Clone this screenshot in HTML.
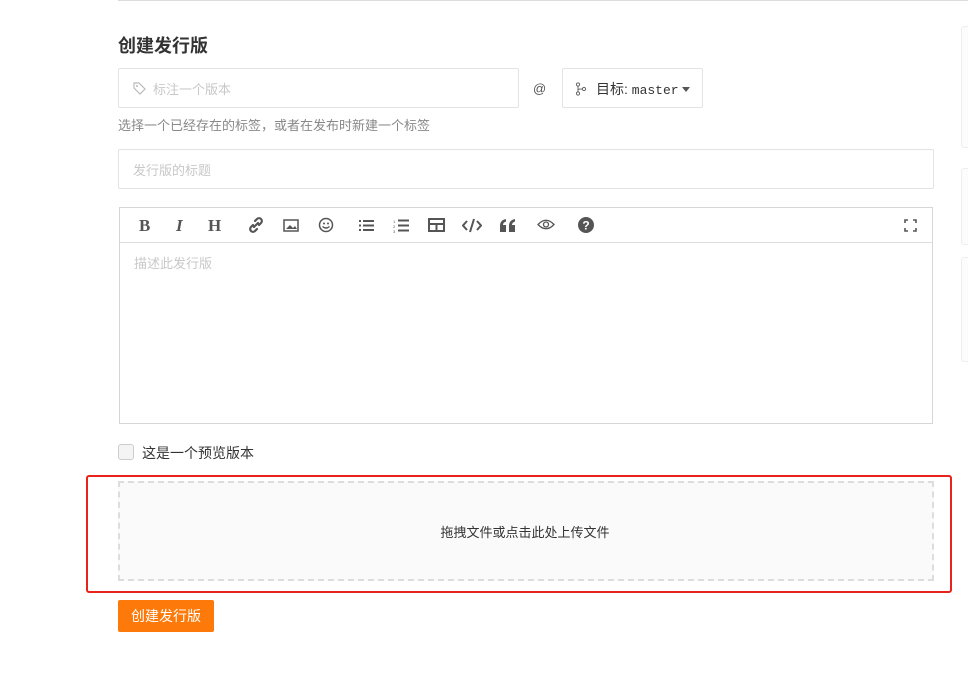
<!DOCTYPE html>
<html><head><meta charset="utf-8"><style>
*{box-sizing:border-box;margin:0;padding:0}
body{width:968px;height:674px;background:#fff;font-family:"Liberation Sans","Noto Sans CJK SC",sans-serif;position:relative;overflow:hidden;color:#333}
.a{position:absolute}
.inp{border:1px solid #e3e3e3;border-radius:2px;background:#fff}
.ph{color:#c8c8c8;font-size:13px}
.tb span{position:absolute;top:8px;font-size:17px;color:#555;font-weight:bold}
.card{position:absolute;left:961px;width:10px;border:1px solid #eee;border-radius:3px;background:#fcfcfc}
</style></head><body>
<div class="a" style="left:118px;top:0;width:850px;height:1px;background:#ddd"></div>
<div class="card" style="top:26px;height:122px"></div>
<div class="card" style="top:168px;height:77px"></div>
<div class="card" style="top:257px;height:105px"></div>
<div class="a" style="left:118px;top:32px;font-size:18px;font-weight:bold;color:#333">创建发行版</div>
<div class="a inp" style="left:118px;top:68px;width:401px;height:40px">
<svg class="a" style="left:14px;top:13px" width="13" height="13" viewBox="0 0 13 13"><path d="M1 1h5l6 6-5 5-6-6z" fill="none" stroke="#bbb" stroke-width="1.2"/><circle cx="4" cy="4" r="1" fill="#bbb"/></svg>
<span class="a ph" style="left:34px;top:10px">标注一个版本</span></div>
<div class="a" style="left:533px;top:81px;font-size:13px;color:#555">@</div>
<div class="a inp" style="left:562px;top:68px;width:141px;height:40px;font-size:14px;color:#333">
<svg class="a" style="left:12px;top:13px" width="12" height="14" viewBox="0 0 12 14"><circle cx="3" cy="2.5" r="1.6" fill="none" stroke="#666"/><circle cx="3" cy="11.5" r="1.6" fill="none" stroke="#666"/><circle cx="9" cy="7" r="1.6" fill="none" stroke="#666"/><path d="M3 4v6M3 8c0-1 2-1 4.5-1" fill="none" stroke="#666"/></svg>
<span class="a" style="left:33px;top:10px">目标: <span style="font-family:'Liberation Mono',monospace;font-size:13px">master</span></span>
<svg class="a" style="left:119px;top:18px" width="8" height="5"><path d="M0 0h8L4 5z" fill="#555"/></svg></div>
<div class="a" style="left:118px;top:115px;font-size:13px;color:#888">选择一个已经存在的标签，或者在发布时新建一个标签</div>
<div class="a inp" style="left:118px;top:149px;width:816px;height:40px"><span class="a ph" style="left:14px;top:10px">发行版的标题</span></div>
<div class="a" style="left:119px;top:207px;width:814px;height:217px;border:1px solid #d6d6d6">
<div class="tb" style="position:relative;height:35px;border-bottom:1px solid #ddd">
<span style="left:19px;font-family:'Liberation Serif',serif">B</span>
<span style="left:56px;font-family:'Liberation Serif',serif;font-style:italic">I</span>
<span style="left:88px;font-family:'Liberation Serif',serif">H</span>
<svg class="a" style="left:128px;top:9px" width="16" height="16"><path d="M7 4l2-2a2.8 2.8 0 0 1 4 4l-2 2M9 12l-2 2a2.8 2.8 0 0 1-4-4l2-2M6 10l4-4" fill="none" stroke="#555" stroke-width="2.2" stroke-linecap="round"/></svg>
<svg class="a" style="left:163px;top:11px" width="16" height="13"><rect x="1" y="1" width="14" height="11" fill="none" stroke="#555" stroke-width="1.5"/><path d="M3 10l4-4 3 3 2-2 2 3z" fill="#555"/></svg>
<svg class="a" style="left:198px;top:9px" width="16" height="16"><circle cx="8" cy="8" r="6.5" fill="none" stroke="#555" stroke-width="1.5"/><circle cx="6" cy="6.5" r="1" fill="#555"/><circle cx="10" cy="6.5" r="1" fill="#555"/><path d="M4.5 9.5q3.5 3 7 0" fill="none" stroke="#555" stroke-width="1.4"/></svg>
<svg class="a" style="left:238px;top:11px" width="17" height="13"><path d="M1 2h2M1 6.5h2M1 11h2M5 2h11M5 6.5h11M5 11h11" stroke="#555" stroke-width="2"/></svg>
<svg class="a" style="left:273px;top:10px" width="17" height="15"><path d="M5 2.5h11M5 7.5h11M5 12.5h11" stroke="#555" stroke-width="2"/><text x="0" y="5" font-size="4" fill="#555">1</text><text x="0" y="10" font-size="4" fill="#555">2</text><text x="0" y="15" font-size="4" fill="#555">3</text></svg>
<svg class="a" style="left:308px;top:10px" width="17" height="14"><rect x="1" y="1" width="15" height="12" fill="none" stroke="#555" stroke-width="2"/><path d="M1 6h15M8.5 6v7" stroke="#555" stroke-width="2"/></svg>
<svg class="a" style="left:342px;top:10px" width="20" height="15"><path d="M5 3L1 7.5 5 12M15 3l4 4.5-4 4.5M12 1L8 14" fill="none" stroke="#555" stroke-width="2"/></svg>
<svg class="a" style="left:379px;top:10px" width="17" height="14"><path d="M1 14V8Q1 2 7 1v2.5Q4 4.5 4 7h3v7zM10 14V8q0-6 6-7v2.5Q13 4.5 13 7h3v7z" fill="#555"/></svg>
<svg class="a" style="left:417px;top:10px" width="18" height="13"><path d="M1 6.5Q9 -2 17 6.5Q9 15 1 6.5z" fill="none" stroke="#555" stroke-width="1.3"/><circle cx="9" cy="6.5" r="2.5" fill="none" stroke="#555" stroke-width="1.3"/></svg>
<svg class="a" style="left:458px;top:9px" width="16" height="16"><circle cx="8" cy="8" r="8" fill="#555"/><text x="8" y="12.5" font-size="12" font-weight="bold" text-anchor="middle" fill="#fff" font-family="Liberation Sans">?</text></svg>
<svg class="a" style="left:784px;top:11px" width="13" height="13"><path d="M1 4V1h3M9 1h3v3M12 9v3H9M4 12H1V9" fill="none" stroke="#555" stroke-width="1.6"/></svg>
</div>
<span class="a ph" style="left:14px;top:45px">描述此发行版</span>
</div>
<div class="a" style="left:118px;top:444px;width:16px;height:16px;border:1px solid #ccc;border-radius:3px;background:#f4f4f4"></div>
<div class="a" style="left:142px;top:443px;font-size:14px;color:#333">这是一个预览版本</div>
<div class="a" style="left:86px;top:475px;width:866px;height:118px;border:2px solid #e8231b;border-radius:3px"></div>
<div class="a" style="left:118px;top:481px;width:816px;height:100px;border:2px dashed #ddd;background:#fafafa"></div>
<div class="a" style="left:0;top:522px;width:1050px;text-align:center;font-size:13px;color:#333">拖拽文件或点击此处上传文件</div>
<div class="a" style="left:118px;top:600px;width:96px;height:32px;background:#fd7a0a;border-radius:2px;color:#fff;font-size:14px;text-align:center;line-height:32px">创建发行版</div>
</body></html>
